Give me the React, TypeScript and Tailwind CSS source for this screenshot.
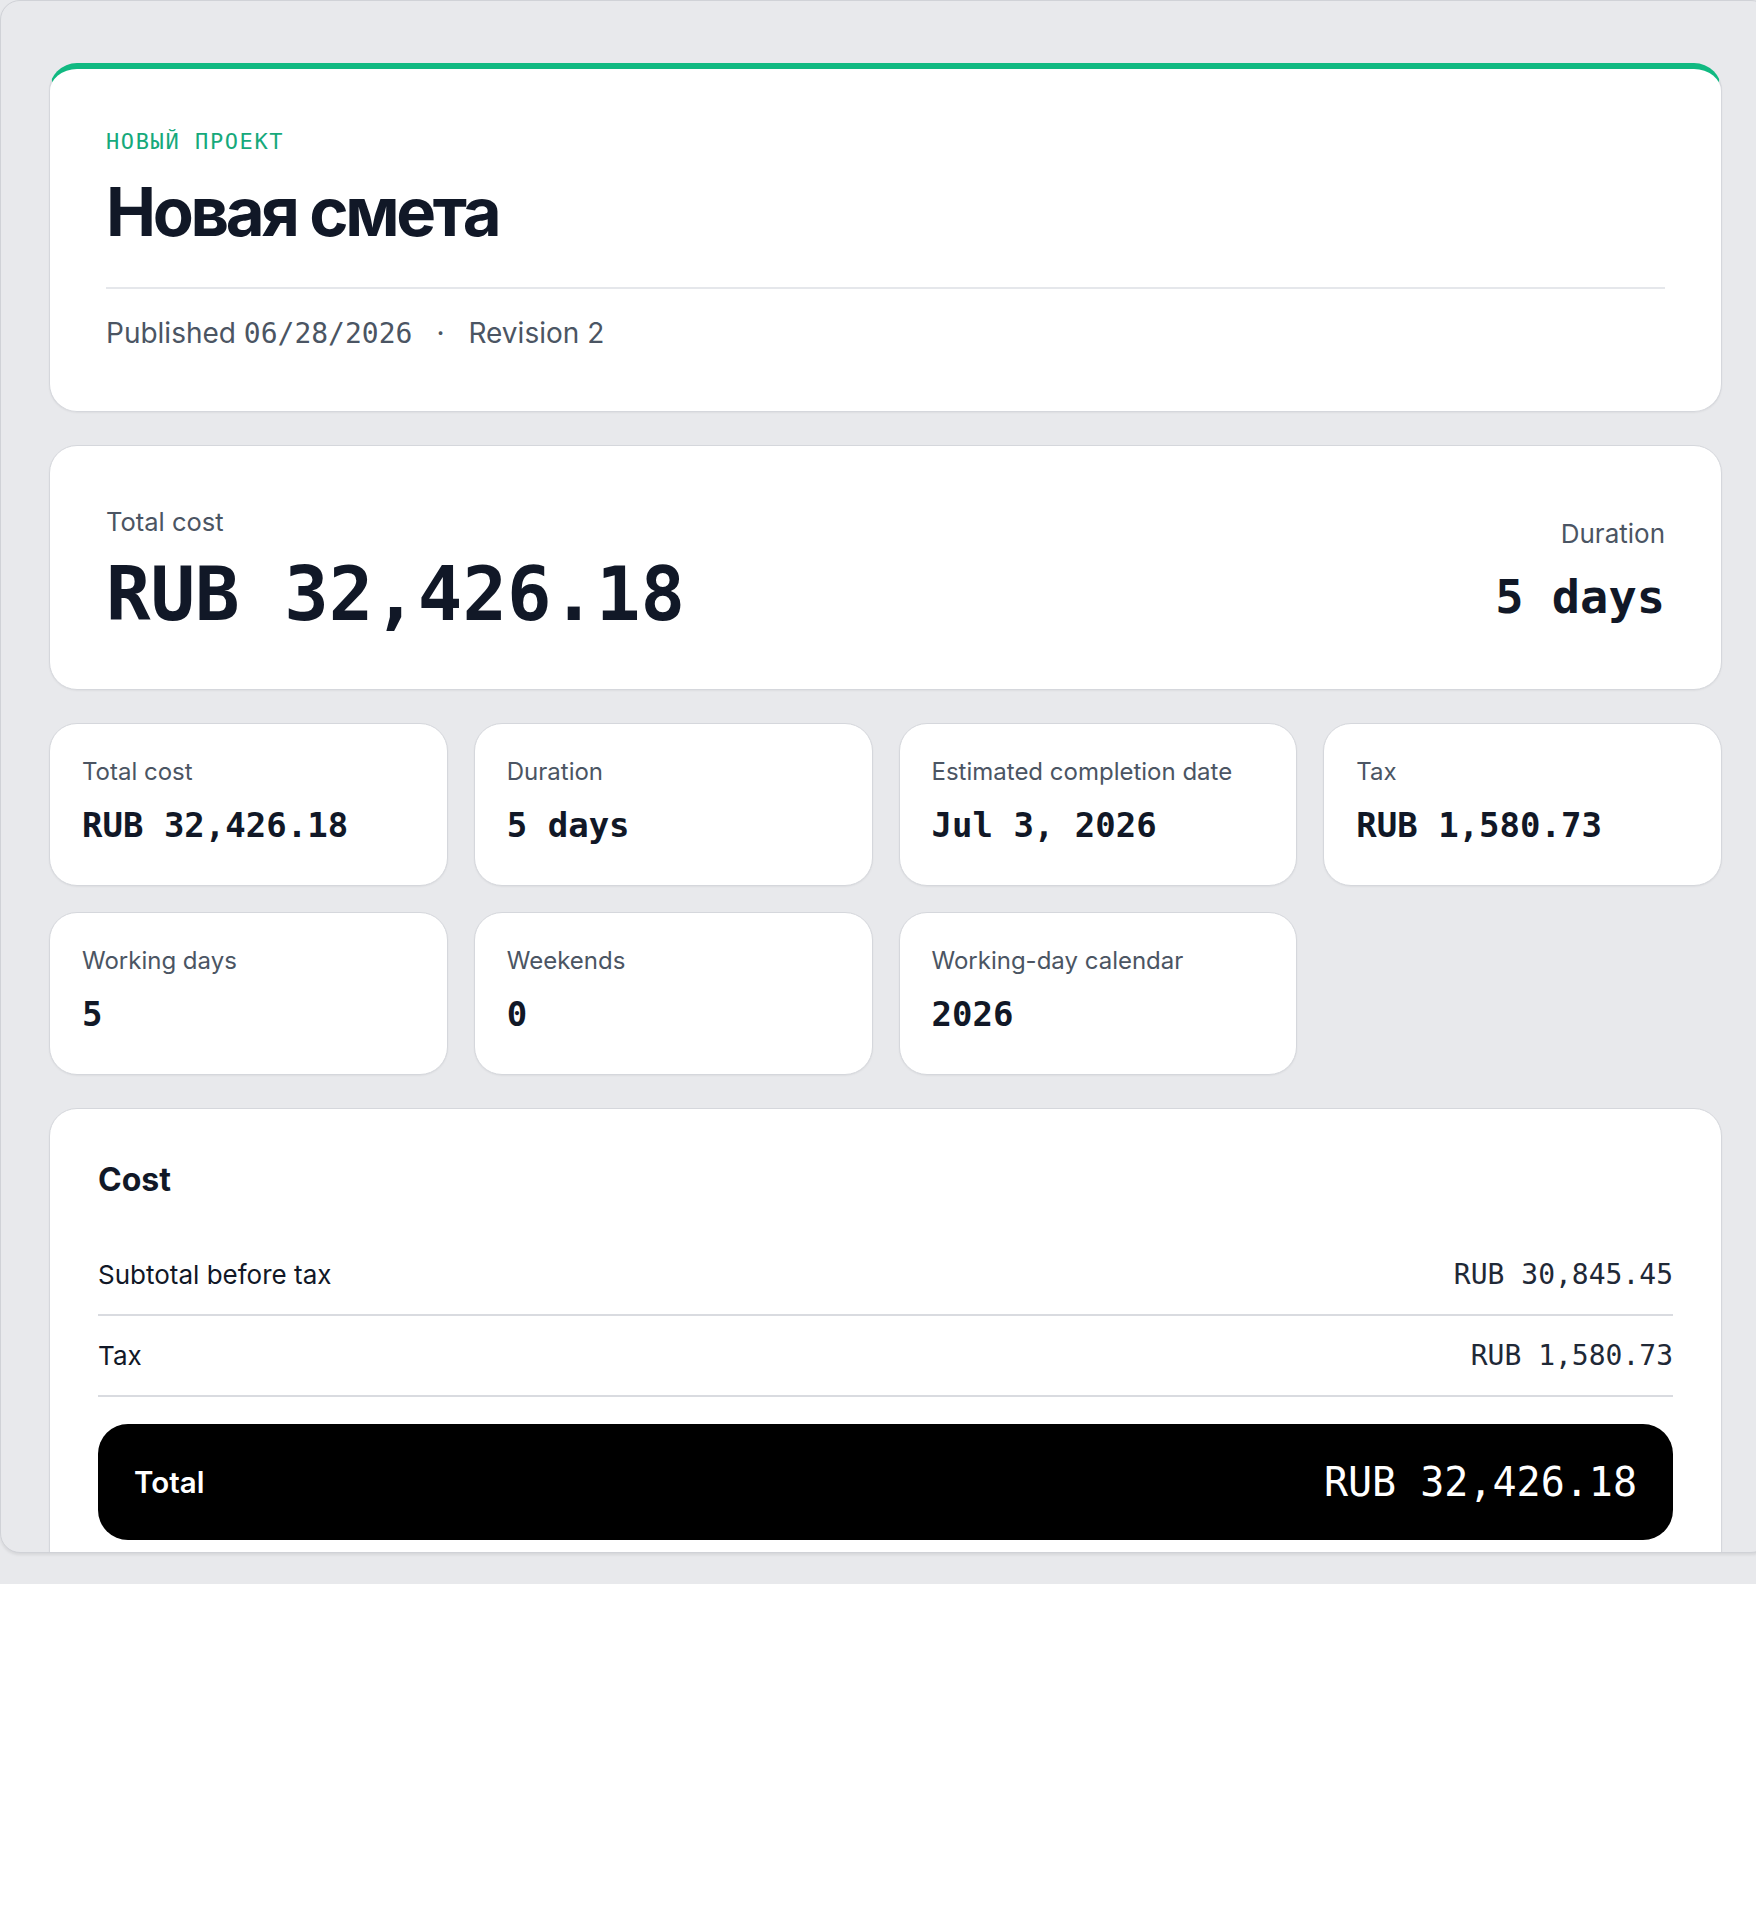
const sans = "font-['Inter','Noto_Sans',sans-serif]";
const mono = "font-['DejaVu_Sans_Mono','Liberation_Mono',monospace]";

interface Stat {
  label: string;
  value: string;
}

const stats: Stat[] = [
  { label: 'Total cost', value: 'RUB 32,426.18' },
  { label: 'Duration', value: '5 days' },
  { label: 'Estimated completion date', value: 'Jul 3, 2026' },
  { label: 'Tax', value: 'RUB 1,580.73' },
  { label: 'Working days', value: '5' },
  { label: 'Weekends', value: '0' },
  { label: 'Working-day calendar', value: '2026' },
];

const costRows = [
  { label: 'Subtotal before tax', value: 'RUB 30,845.45' },
  { label: 'Tax', value: 'RUB 1,580.73' },
];

const card = 'rounded-[28px] border border-[#d5d7dc] bg-white shadow-[0_1px_2px_rgba(0,0,0,0.05)]';

export default function App() {
  return (
    <div className={`overflow-hidden bg-[#e8e9ec] pb-[31px] ${sans}`}>
      <div className="h-[1553px] w-[1771px] overflow-hidden rounded-[20px] border border-[#d0d2d7] bg-[#e8e9ec] px-12 pt-[62px] shadow-[0_2px_3px_rgba(0,0,0,0.08)]">
        <div className="flex flex-col gap-[33px]">
          {/* header */}
          <div className={`${card} border-t-[6px] border-t-[#10b981] px-14 pt-14 pb-14`}>
            <div className={`${mono} text-[22px] leading-[1.5] tracking-[1.6px] text-[#16a97b] uppercase`}>
              Новый проект
            </div>
            <h1 className="mt-5 text-[67px] leading-none font-bold tracking-[-0.05em] text-[#111827]">
              Новая смета
            </h1>
            <div className="mt-[42px] flex items-baseline gap-6 border-t-2 border-[#e5e7eb] pt-6 text-[28px] leading-[1.45] text-[#4b5563]">
              <span>
                Published <span className={mono}>06/28/2026</span>
              </span>
              <span>·</span>
              <span>Revision 2</span>
            </div>
          </div>

          {/* summary */}
          <div className={`${card} flex items-center justify-between px-14 pt-[57px] pb-[58px]`}>
            <div>
              <div className="text-[25.5px] leading-[1.5] text-[#4b5563]">Total cost</div>
              <div className={`${mono} mt-4 text-[74px] leading-none font-bold text-[#111827]`}>
                RUB 32,426.18
              </div>
            </div>
            <div className="text-right">
              <div className="text-[26px] leading-[1.5] text-[#4b5563]">Duration</div>
              <div className={`${mono} mt-5 text-[47px] leading-none font-bold text-[#111827]`}>5 days</div>
            </div>
          </div>

          {/* stats grid */}
          <div className="grid grid-cols-4 gap-x-[26px] gap-y-[26px]">
            {stats.map((s) => (
              <div key={s.label} className={`${card} px-8 pt-8 pb-[34px]`}>
                <div className="text-2xl text-[#4b5563]">{s.label}</div>
                <div className={`${mono} mt-3 text-[34px] leading-[1.5] font-bold text-[#111827]`}>{s.value}</div>
              </div>
            ))}
          </div>

          {/* cost breakdown */}
          <div className={`${card} p-12`}>
            <h2 className="text-[32px] leading-[1.45] font-bold text-[#111827]">Cost</h2>
            <div className="mt-8">
              {costRows.map((r) => (
                <div
                  key={r.label}
                  className="flex items-center justify-between border-b-2 border-[#d9dbe0] py-5"
                >
                  <span className="text-[26px] leading-[1.5] text-[#111827]">{r.label}</span>
                  <span className={`${mono} text-[28px] leading-none text-[#1f2937]`}>{r.value}</span>
                </div>
              ))}
            </div>
            <div className="mt-[27px] flex items-center justify-between rounded-[30px] bg-black py-[38px] pr-9 pl-9 text-white">
              <span className="text-[29.5px] leading-10 font-semibold">Total</span>
              <span className={`${mono} text-[40px] leading-10`}>RUB 32,426.18</span>
            </div>
          </div>
        </div>
      </div>
    </div>
  );
}
